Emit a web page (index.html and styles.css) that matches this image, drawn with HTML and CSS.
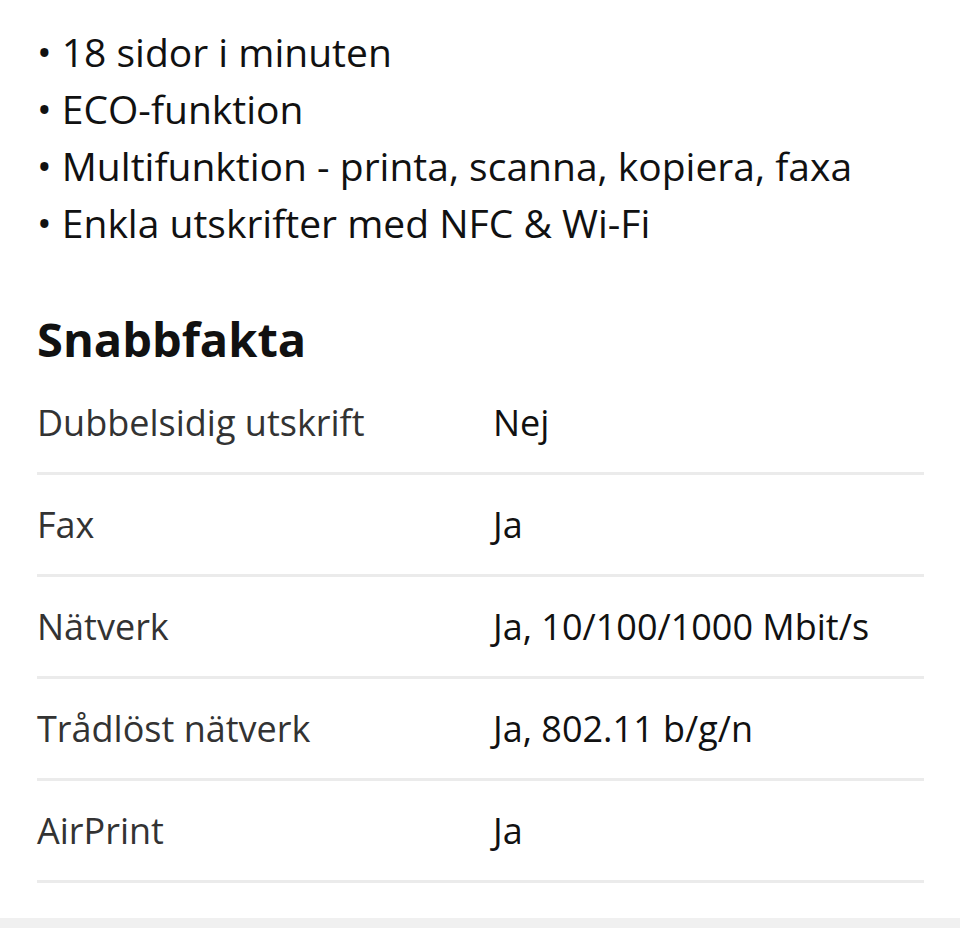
FILE: index.html
```html
<!DOCTYPE html>
<html lang="sv">
<head>
<meta charset="utf-8">
<link rel="stylesheet" href="styles.css">
</head>
<body>
<div class="page">
  <ul class="features">
    <li>• 18 sidor i minuten</li>
    <li>• ECO-funktion</li>
    <li>• Multifunktion - printa, scanna, kopiera, faxa</li>
    <li>• Enkla utskrifter med NFC &amp; Wi-Fi</li>
  </ul>
  <h2 class="title">Snabbfakta</h2>
  <div class="facts">
    <div class="row"><span class="label">Dubbelsidig utskrift</span><span class="value">Nej</span></div>
    <div class="row"><span class="label">Fax</span><span class="value">Ja</span></div>
    <div class="row"><span class="label">Nätverk</span><span class="value">Ja, 10/100/1000 Mbit/s</span></div>
    <div class="row"><span class="label">Trådlöst nätverk</span><span class="value">Ja, 802.11 b/g/n</span></div>
    <div class="row"><span class="label">AirPrint</span><span class="value">Ja</span></div>
  </div>
</div>
<div class="footer-band"></div>
</body>
</html>
```
FILE: styles.css
```css
html, body {
  margin: 0;
  padding: 0;
  background: #ffffff;
}
body {
  font-family: "Open Sans", "Noto Sans", sans-serif;
  color: #111111;
  width: 960px;
  height: 928px;
  overflow: hidden;
  display: flex;
  flex-direction: column;
}
.page {
  padding: 0 36px 0 37px;
  flex: 1;
}
.features {
  list-style: none;
  margin: 0;
  padding: 23px 0 0 0;
  font-size: 39px;
  line-height: 57px;
  color: #111111;
}
.title {
  margin: 60px 0 0 0;
  font-size: 47px;
  font-weight: 700;
  line-height: 56px;
  color: #111111;
}
.facts {
  margin-top: 6px;
}
.row {
  display: flex;
  align-items: center;
  height: 99px;
  border-bottom: 3px solid #ebebeb;
  font-size: 36px;
}
.label {
  width: 456px;
  color: #333333;
}
.value {
  color: #111111;
}
.footer-band {
  height: 10px;
  background: #f0f0f0;
}
```
